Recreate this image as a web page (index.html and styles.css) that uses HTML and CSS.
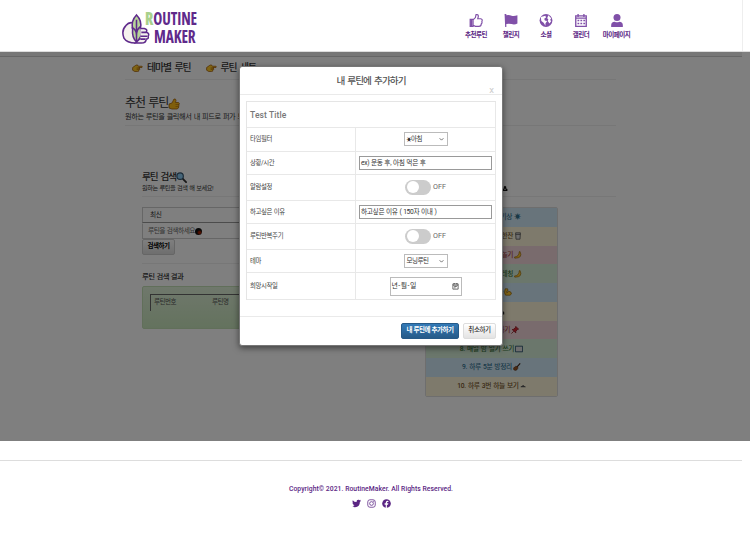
FILE: index.html
```
<!DOCTYPE html>
<html lang="ko">
<head>
<meta charset="utf-8">
<title>Routine Maker</title>
<link rel="stylesheet" href="styles.css">
</head>
<body>
<svg class="defs" width="0" height="0">
  <symbol id="point" viewBox="0 0 24 18"><path d="M1 8 8 3q3-2 5 0l1 2h8q2 1 0 3h-7l2 1-1 2 1 1-2 2v2l-3 1H6l-5-3z" fill="#ffc928" stroke="#9b5200" stroke-width="1.6"/><path d="M10 9h6M10 12h6" stroke="#9b5200" stroke-width="1.4"/></symbol>
  <symbol id="thumb" viewBox="0 0 24 24"><path d="M2 12 8 10l4-8q4-1 4 3l-1 4h6q3 2 1 4l-1 7-3 2H8l-6-2z" fill="#ffbd17" stroke="#a15e00" stroke-width="1.5"/><path d="M15 13h7M15 17h6" stroke="#a15e00"/></symbol>
  <symbol id="search" viewBox="0 0 24 24"><path d="m14 14 8 8" stroke="#333" stroke-width="4" stroke-linecap="round"/><circle cx="9" cy="9" r="7" fill="#8dcdf5" stroke="#34556d" stroke-width="2.5"/></symbol>
  <symbol id="banana" viewBox="0 0 20 20"><path d="M15 1q8 17-13 17l-1-3Q13 14 13 2z" fill="#ffc72e" stroke="#805000" stroke-width="1.3"/></symbol>
  <symbol id="arm" viewBox="0 0 20 20"><path d="M3 2h6l1 5-3 1v4q5-6 10-2 4 6-2 8H4q-5-5-1-16z" fill="#ffc72e" stroke="#805000" stroke-width="1.5"/></symbol>
  <symbol id="pin" viewBox="0 0 20 20"><path d="m12 1 7 7-3 1-4 4v4L3 9l4-1 4-4zM7 13l-6 6" fill="#d22632" stroke="#881820" stroke-width="2"/></symbol>
  <symbol id="guitar" viewBox="0 0 20 20"><path d="m18 1-9 10" stroke="#402010" stroke-width="3"/><path d="M7 8q5 0 6 5-2 1-3 4-4 4-8 0-3-4 2-7z" fill="#945020" stroke="#402010"/></symbol>
</svg>

<header class="header">
  <div class="brand">
    <svg class="brand-mark" viewBox="0 0 30 32" fill="none" stroke="#5f2a8b" stroke-width="1.6">
      <path d="M14 31q-9 0-12-5-3-8 2-13 4-5 9-2" fill="#f5f2ee"/>
      <path d="M15 2q6 6 4 14 3 8-4 14-5-5-4-13-2-9 4-15z" fill="#b7d49a"/>
      <path d="M15 7v22M10 15q5 2 5 8 0-6 4-9"/>
      <path d="M19 16h4q4 1 2 4 4 1 2 4 1 3-2 3 0 4-5 4h-6l5-5" fill="#f5f2ee"/>
      <path d="M20 20h5M19 24h7M19 27h5"/>
    </svg>
    <div class="brand-name"><span><b>R</b>OUTINE</span><span class="maker">MAKER</span></div>
  </div>
  <nav class="menu">
    <a><svg viewBox="0 0 24 24"><path d="M7 10v12H2V10zm0 1 4-4 1-5q4-1 4 3l-1 4h5q4 1 2 5 1 2-1 4 0 4-4 4h-6l-4-2" fill="none" stroke="currentColor" stroke-width="2"/><path d="M2 11h4v11H2z" fill="currentColor"/></svg><span>추천루틴</span></a>
    <a><svg viewBox="0 0 24 24"><path d="M1 1h3v2q5-1 9 1 5 1 10-1v14q-5 3-10 1-5-1-9 0v5H2z" fill="currentColor"/></svg><span>챌린지</span></a>
    <a><svg viewBox="0 0 24 24"><circle cx="12" cy="12" r="11" fill="currentColor"/><path d="m3 6 8-2 1 3-3 2 1 3 4 1-3 4v4l-3-5-4-3zm13-3 5 5-2 3 2 2-3 4-3-4 1-3-2-2z" fill="#fff"/></svg><span>소셜</span></a>
    <a><svg viewBox="0 0 24 24"><path d="M3 4h18v18H3zM3 8h18M7 1v5m10-5v5" fill="none" stroke="currentColor" stroke-width="2.3"/><path d="M6 12h3m2 0h3m2 0h3M6 17h3m2 0h3m2 0h3" stroke="currentColor" stroke-width="2.5"/></svg><span>캘린더</span></a>
    <a><svg viewBox="0 0 24 24"><circle cx="12" cy="7" r="6" fill="currentColor"/><path d="M2 23v-3q0-6 6-6 4 2 8 0 6 0 6 6v3z" fill="currentColor"/></svg><span>마이페이지</span></a>
  </nav>
</header>

<main class="main">
  <div class="container">
    <nav class="tabs"><a><svg><use href="#point"/></svg>테마별 루틴</a><a><svg><use href="#point"/></svg>루틴 세트</a></nav>
    <section class="intro"><h1>추천 루틴<svg><use href="#thumb"/></svg></h1><p>원하는 루틴을 클릭해서 내 피드로 퍼가 보세요!</p></section>
    <div class="columns">
      <section class="finder">
        <div class="section-head"><h2>루틴 검색<svg><use href="#search"/></svg></h2><p>원하는 루틴을 검색 해 보세요!</p></div>
        <div class="field">최신</div>
        <div class="field query">루틴을 검색하세요<i class="dot"></i></div>
        <button class="search-button">검색하기</button>
        <h3>루틴 검색 결과</h3>
        <div class="results"><div class="result-head"><span>루틴번호</span><span>루틴명</span></div></div>
      </section>
      <section class="ranking">
        <div class="section-head rank-head"><h2>인기 루틴</h2><svg viewBox="0 0 20 20"><path d="M2 18v-6l4-2V4l4-3 4 3v6l4 2v6z" fill="#111"/><path d="M8 11h4v4H8z" fill="#ddd"/></svg></div>
        <ol>
          <li class="blue">1. 아침 6시에 기상 ☀</li>
          <li class="yellow">2. 일어나서 물 한잔 <svg viewBox="0 0 20 20"><path d="M4 2h12l-1 16H5zM4 6h12" fill="#ddd" stroke="#555" stroke-width="2"/></svg></li>
          <li class="red">3. 친구와 함께 놀기<svg><use href="#banana"/></svg></li>
          <li class="green">4. 자기 전 스트레칭 <svg><use href="#banana"/></svg></li>
          <li class="blue">5. 매일 운동 <svg><use href="#arm"/></svg></li>
          <li class="yellow">6. 산책 <svg viewBox="0 0 20 20"><path d="M2 19V8q6-12 11 0l5 5v6z" fill="#222"/></svg></li>
          <li class="red">7. 하루 한집 파기<svg><use href="#pin"/></svg></li>
          <li class="green">8. 매일 밤 일기 쓰기<svg viewBox="0 0 20 20"><path d="M1 3h18v14H1z" fill="#ddd" stroke="#174060" stroke-width="2"/></svg></li>
          <li class="blue">9. 하루 5분 방정리 <svg><use href="#guitar"/></svg></li>
          <li class="yellow">10. 하루 3번 하늘 보기 <svg class="cloud" viewBox="0 0 20 20"><path d="M2 14q0-5 5-4 3-6 7 0 5 0 5 4z" fill="#555"/></svg></li>
        </ol>
      </section>
    </div>
  </div>
  <div class="backdrop"></div>
</main>

<footer class="footer">
  <p>Copyright© 2021. RoutineMaker. All Rights Reserved.</p>
  <div class="social">
    <svg viewBox="0 0 24 24"><path d="M23 5q-1 2-2 3 0 13-13 14-4 0-7-2 4 0 6-2-3 0-4-4h2q-4-1-4-5l2 1Q0 7 2 3q4 5 10 5 0-7 6-6l3 1 3-1-2 3z" fill="currentColor"/></svg>
    <svg viewBox="0 0 24 24" fill="none" stroke="currentColor" stroke-width="2"><rect x="2" y="2" width="20" height="20" rx="6"/><circle cx="12" cy="12" r="5"/><circle cx="18" cy="6" r=".6"/></svg>
    <svg viewBox="0 0 24 24"><circle cx="12" cy="12" r="11.5" fill="currentColor"/><path d="M10 24v-9H7v-4h3V9q0-5 7-4v3h-2q-2 0-2 3h4l-1 4h-3v9" fill="#fff"/></svg>
  </div>
</footer>

<div class="modal" role="dialog">
  <div class="modal-head"><h2>내 루틴에 추가하기</h2><button class="close">x</button></div>
  <div class="modal-body">
    <div class="form">
      <div class="form-title">Test Title</div>
      <div class="label">타임필터</div><div class="cell"><div class="select"><span><small>☀</small>아침</span><svg viewBox="0 0 8 8"><path d="m1 2 3 3 3-3"/></svg></div></div>
      <div class="label">상황/시간</div><div class="cell"><div class="input">ex) 운동 후, 아침 먹은 후</div></div>
      <div class="label">알람설정</div><div class="cell"><span class="switch"></span><span class="off">OFF</span></div>
      <div class="label">하고싶은 이유</div><div class="cell"><div class="input">하고싶은 이유 ( 150자 이내 )</div></div>
      <div class="label">루틴반복주기</div><div class="cell"><span class="switch"></span><span class="off">OFF</span></div>
      <div class="label">테마</div><div class="cell"><div class="select">모닝루틴<svg viewBox="0 0 8 8"><path d="m1 2 3 3 3-3"/></svg></div></div>
      <div class="label">희망시작일</div><div class="cell"><div class="date">년-월-일<svg viewBox="0 0 16 16"><path d="M2 2h12v12H2zM2 5h12M5 8h6M5 11h3M5 0v3m6-3v3"/></svg></div></div>
    </div>
  </div>
  <div class="modal-foot"><button class="btn primary">내 루틴에 추가하기</button><button class="btn">취소하기</button></div>
</div>
</body>
</html>
```
FILE: styles.css
```
* { box-sizing: border-box; }
body { margin: 0; height: 557px; position: relative; overflow: hidden; background: #fff; color: #333; font-family: Roboto, "Noto Sans CJK KR", sans-serif; font-size: 6.5px; line-height: 1.2; }
h1, h2, h3, p, ol { margin: 0; padding: 0; font-weight: 400; }
button { font: inherit; padding: 0; }
svg { flex: none; }
.defs { position: absolute; }

.header { width: 743px; height: 51px; padding: 10px 112px 0 122px; display: flex; justify-content: space-between; border-right: 1px solid #eee; }
.brand { display: flex; width: 76px; }
.brand-mark { width: 29px; height: 33px; margin-top: 2px; }
.brand-name { font: 700 17px/18px "Open Sans", sans-serif; color: #5f2a8b; width: 51px; margin-left: -6px; transform: scaleX(.9); transform-origin: left; white-space: nowrap; letter-spacing: -.1px; font-stretch: 75%; }
.brand-name span { display: block; }
.brand-name b { color: #a9d18b; }
.brand-name .maker { padding-left: 10px; }
.menu { display: grid; grid-template-columns: 35px 35px 35px 35px 36px; margin-right: -4.5px; padding-top: 3px; color: #8050a8; }
.menu a { display: flex; flex-direction: column; align-items: center; gap: 3px; }
.menu svg { width: 14px; height: 15px; }
.menu span { color: #5b2684; font-size: 6.5px; font-weight: 700; line-height: 8px; letter-spacing: -.45px; white-space: nowrap; }

.main { position: relative; height: 390px; overflow: hidden; border-top: 1px solid #ddd; }
.main::before { content: ""; display: block; width: 742px; height: 4px; border-bottom: 1px solid #ccc; background: #eee; }
.backdrop { position: absolute; inset: 0; background: rgba(0, 0, 0, .5); }
.container { width: 491px; margin-left: 125px; }
.tabs { height: 23px; border-bottom: 1px solid #eee; display: flex; gap: 15px; padding: 0 0 1px 7px; align-items: center; font-size: 9.8px; letter-spacing: -1px; word-spacing: 2px; font-weight: 500; }
.tabs a { display: flex; gap: 4px; align-items: center; }
.tabs svg { width: 11px; height: 8px; }
.intro { height: 46px; padding-top: 15px; border-bottom: 1px solid #eee; }
.intro h1 { height: 17px; font-size: 12px; line-height: 17px; display: flex; align-items: center; letter-spacing: -1.1px; word-spacing: 1.5px; }
.intro h1 svg { width: 12px; height: 12px; margin-left: 1px; }
.intro h1, .section-head h2 { margin-right: -2px; }
.intro h1 svg { margin-left: 0; }
.intro p { font-size: 7.2px; line-height: 9px; letter-spacing: -.4px; word-spacing: .8px; }
.columns { display: grid; grid-template-columns: 266px 133px; gap: 17px; padding: 45px 0 0 17px; }
.section-head { height: 26px; border-bottom: 1px solid #eee; margin-bottom: 10px; }
.section-head h2 { display: flex; align-items: center; font-size: 9.6px; line-height: 12px; letter-spacing: -1px; word-spacing: 1.4px; font-weight: 500; }
.section-head svg { width: 11px; height: 11px; margin-left: 0; }
.section-head p { font-size: 6.2px; line-height: 10px; letter-spacing: -.45px; word-spacing: .7px; }
.field { width: 250px; height: 16px; padding-left: 7px; border: 1px solid #ccc; border-bottom-color: #999; font-size: 6.7px; line-height: 14px; letter-spacing: -.3px; }
.field.query { padding-left: 5px; color: #666; border-color: transparent #ccc #ccc; display: flex; align-items: center; letter-spacing: -.5px; word-spacing: .6px; }
.dot { width: 7px; height: 7px; border-radius: 50%; background: radial-gradient(circle at 65% 65%, #a22000 15%, #111 40%); }
.search-button { display: block; width: 33px; height: 16px; border: 1px solid #ccc; border-radius: 2px; background: linear-gradient(#fff, #ddd); font-size: 6.5px; font-weight: 700; letter-spacing: -.5px; }
.finder h3 { margin-top: 8px; padding-top: 7px; height: 23px; border-top: 1px solid #eee; font-size: 7.4px; font-weight: 500; line-height: 12px; letter-spacing: -.55px; word-spacing: .6px; }
.results { height: 43px; padding: 7px; background: linear-gradient(#dff0d8, #c8e5bc); border: 1px solid #c2dfb4; border-radius: 2px; }
.result-head { height: 17px; border: solid #666; border-width: 1px 0 0 1px; display: flex; gap: 36px; padding: 4px 3px; color: #555; font-size: 6.5px; letter-spacing: -.5px; }
.rank-head { display: flex; align-items: flex-end; justify-content: space-between; padding: 0 0 4px; width: 191px; }
.rank-head svg { width: 6px; height: 7px; margin-right: 108px; }
.ranking { min-width: 0; }
.ranking ol { list-style: none; border: 1px solid #ddd; border-radius: 2px; }
.ranking li { height: 18.75px; display: flex; align-items: center; justify-content: center; gap: 1px; font-size: 6.7px; font-weight: 500; letter-spacing: -.3px; word-spacing: .7px; }
.ranking li svg { width: 8px; height: 8px; }
.ranking li .cloud { width: 6px; }
.blue { background: #d1e9f6; color: #31708f; }
.yellow { background: #fcf4d8; color: #76562b; }
.red { background: #f2d7da; color: #a94442; }
.green { background: #d7eed8; color: #3c763d; }

.footer { width: 742px; padding-top: 19px; color: #5b2684; text-align: center; }
.footer p { border-top: 1.5px solid #ddd; padding-top: 21.5px; height: 38px; font-size: 6.8px; font-weight: 500; line-height: 12px; letter-spacing: .04px; }
.social { display: flex; justify-content: center; gap: 6px; }
.social svg { width: 9px; height: 11px; }

.modal { position: absolute; left: 239px; top: 66px; width: 264px; height: 280px; background: #fff; border: 1px solid #777; border-radius: 3px; box-shadow: 0 2px 6px rgba(0, 0, 0, .5); }
.modal-head { height: 28px; border-bottom: 1px solid #eaeaea; position: relative; text-align: center; }
.modal-head h2 { font-size: 9.6px; font-weight: 500; line-height: 27px; letter-spacing: -.95px; word-spacing: 1.6px; color: #555; }
.close { position: absolute; right: 8px; top: 17px; border: 0; background: none; color: #ccc; font-size: 9.5px; line-height: 12px; }
.modal-body { height: 222px; padding: 6px 5px 0 6px; border-bottom: 1px solid #eaeaea; }
.form { width: 250px; display: grid; grid-template-columns: 109px 1fr; grid-template-rows: 26px 23.5px 23.5px 26px 23px 26px 23px 27px; border: solid #e5e5e5; border-width: 1px 0 0 1px; }
.form > div { border: solid #e8e8e8; border-width: 0 1px 1px 0; display: flex; align-items: center; }
.form-title { grid-column: 1 / -1; padding-left: 3px; font: 500 8.5px Roboto, sans-serif; letter-spacing: .1px; color: #777; }
.form > .label { padding: 1.5px 0 0 3px; font-size: 6.4px; letter-spacing: -.35px; word-spacing: .4px; color: #444; }
.cell { justify-content: center; padding: 0 3px; }
.select { width: 44px; height: 14px; padding: 0 3px 0 2px; border: 1px solid #bbb; display: flex; align-items: center; justify-content: space-between; font-size: 6.5px; line-height: 12px; letter-spacing: -.5px; white-space: nowrap; }
.select small { font-size: 5px; vertical-align: 0; }
.select svg { width: 5px; height: 5px; fill: none; stroke: #555; stroke-width: 1.3; }
.input { width: 133px; height: 14px; border: 1px solid #999; padding-left: 1px; line-height: 12px; font-size: 6.7px; letter-spacing: -.35px; word-spacing: .5px; white-space: nowrap; }
.switch { width: 26px; height: 15.5px; border-radius: 8px; background: #ccc; padding: 1.5px; }
.switch::before { content: ""; display: block; width: 12px; height: 12px; border-radius: 50%; background: #fff; }
.off { font-size: 7.2px; color: #666; margin-left: 2px; }
.date { width: 72px; height: 19px; border: 1px solid #bbb; display: flex; align-items: center; justify-content: space-between; padding: 0 2px 0 1px; font-size: 6.9px; letter-spacing: .5px; }
.date svg { width: 7px; height: 7px; fill: none; stroke: #333; stroke-width: 1.6; }
.modal-foot { display: flex; justify-content: flex-end; gap: 4px; padding: 6px 6px 0; }
.btn { width: 33px; height: 16px; border: 1px solid #ddd; border-radius: 2px; background: linear-gradient(#fff, #e3e3e3); color: #333; font-size: 6.5px; font-weight: 500; letter-spacing: -.4px; white-space: nowrap; }
.primary { width: 58px; border-color: #265a88; background: linear-gradient(#337ab7, #265a88); color: #fff; font-weight: 700; letter-spacing: -.5px; word-spacing: .5px; }
```
